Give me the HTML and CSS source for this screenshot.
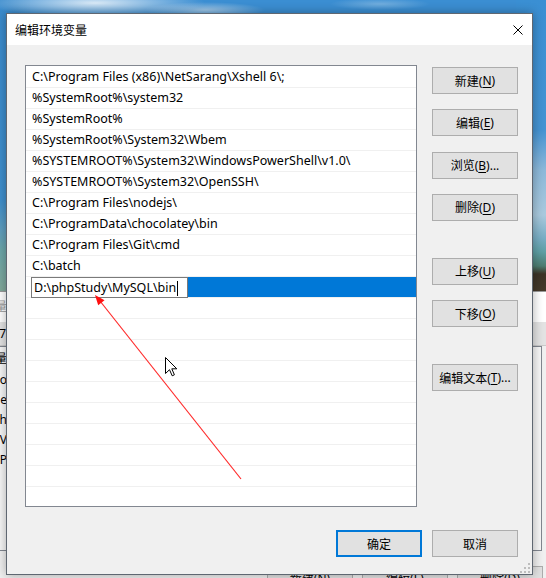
FILE: index.html
```html
<!DOCTYPE html>
<html lang="zh-CN">
<head>
<meta charset="utf-8">
<title>编辑环境变量</title>
<link rel="stylesheet" href="styles.css">
</head>
<body>
<div class="bgwin">
  <div class="bg-title">环境变量</div>
  <div class="bg-band"><span class="bg-cell">7</span></div>
  <div class="bg-list">
    <div class="bg-row bg-head"><span class="bg-cell">量</span></div>
    <div class="bg-row"><span class="bg-cell">o</span></div>
    <div class="bg-row"><span class="bg-cell">e</span></div>
    <div class="bg-row"><span class="bg-cell">th</span></div>
    <div class="bg-row"><span class="bg-cell">V</span></div>
    <div class="bg-row"><span class="bg-cell">IP</span></div>
  </div>
  <div class="bg-buttons">
    <span class="bg-btn">新建(N)</span>
    <span class="bg-btn">编辑(E)</span>
    <span class="bg-btn">删除(D)</span>
  </div>
</div>

<section class="dialog">
  <header class="titlebar">
    <span class="title">编辑环境变量</span>
    <svg class="close" width="10" height="10" viewBox="0 0 10 10"><path d="M0.5 0.5 L9.5 9.5 M9.5 0.5 L0.5 9.5" stroke="#000" stroke-width="1" fill="none"/></svg>
  </header>
  <div class="content">
    <div class="main">
      <div class="list">
        <div class="row">C:\Program Files (x86)\NetSarang\Xshell 6\;</div>
        <div class="row">%SystemRoot%\system32</div>
        <div class="row">%SystemRoot%</div>
        <div class="row">%SystemRoot%\System32\Wbem</div>
        <div class="row">%SYSTEMROOT%\System32\WindowsPowerShell\v1.0\</div>
        <div class="row">%SYSTEMROOT%\System32\OpenSSH\</div>
        <div class="row">C:\Program Files\nodejs\</div>
        <div class="row">C:\ProgramData\chocolatey\bin</div>
        <div class="row">C:\Program Files\Git\cmd</div>
        <div class="row">C:\batch</div>
        <div class="row sel"><span class="edit">D:\phpStudy\MySQL\bin<span class="caret"></span></span></div>
        <div class="row"></div>
        <div class="row"></div>
        <div class="row"></div>
        <div class="row"></div>
        <div class="row"></div>
        <div class="row"></div>
        <div class="row"></div>
        <div class="row"></div>
        <div class="row"></div>
        <div class="row"></div>
      </div>
      <div class="side">
        <button class="btn">新建(<u>N</u>)</button>
        <button class="btn">编辑(<u>E</u>)</button>
        <button class="btn">浏览(<u>B</u>)...</button>
        <button class="btn">删除(<u>D</u>)</button>
        <button class="btn group">上移(<u>U</u>)</button>
        <button class="btn">下移(<u>O</u>)</button>
        <button class="btn group">编辑文本(<u>T</u>)...</button>
      </div>
    </div>
    <div class="footer">
      <button class="btn default">确定</button>
      <button class="btn">取消</button>
    </div>
  </div>
  <svg class="grip" width="10" height="10" viewBox="0 0 10 10">
    <rect x="8" y="0" width="2" height="2"/><rect x="4" y="4" width="2" height="2"/><rect x="8" y="4" width="2" height="2"/>
    <rect x="0" y="8" width="2" height="2"/><rect x="4" y="8" width="2" height="2"/><rect x="8" y="8" width="2" height="2"/>
  </svg>
</section>

<svg class="annot" width="546" height="578" viewBox="0 0 546 578">
  <line x1="241" y1="479" x2="100" y2="301" stroke="#ff2a2a" stroke-width="1.2"/>
  <polygon points="95,295 104.5,300.2 98.2,305.2" fill="#ff1010"/>
</svg>

<svg class="cursor" width="13" height="20" viewBox="0 0 13 20">
  <path d="M0.5 0.5 L0.5 16.5 L4.5 12.7 L7.2 18.8 L9.4 17.8 L6.8 11.8 L11.8 11.8 Z" fill="#fff" stroke="#000" stroke-width="1" stroke-linejoin="miter"/>
</svg>
</body>
</html>
```

FILE: styles.css
```css
* { box-sizing: border-box; }

html, body { margin: 0; padding: 0; }

body {
  width: 546px;
  height: 578px;
  overflow: hidden;
  position: relative;
  font-family: "Noto Sans", "Noto Sans CJK SC", sans-serif;
  font-size: 12px;
  color: #000;
  background:
    radial-gradient(ellipse 110px 14px at 95px 3px, rgba(226,238,248,0.95), rgba(226,238,248,0)),
    radial-gradient(ellipse 60px 8px at 205px 10px, rgba(200,222,240,0.7), rgba(200,222,240,0)),
    radial-gradient(ellipse 50px 6px at 380px 4px, rgba(150,195,230,0.6), rgba(150,195,230,0)),
    linear-gradient(180deg, #3a8bcd 0, #3f8fcd 200px, #5f9ebf 230px, #6ca7aa 250px, #82a99b 290px) left top / 30px 100% no-repeat,
    linear-gradient(180deg, #3a8fd3 0, #4593d2 130px, #8cb8d9 170px, #a9c9dd 215px, #78adc4 238px, #5e9fa4 252px, #4d7c70 266px, #3c3326 274px, #45392a 291px) right top / 30px 100% no-repeat,
    #3b8ed2;
}

/* background window (partly hidden behind the dialog) */
.bgwin {
  position: absolute;
  left: -52px;
  top: 291px;
  width: 600px;
  height: 300px;
  background: #f0f0f0;
  border: 1px solid #9a9a9a;
}
.bg-title {
  height: 30px;
  background: #fff;
  color: #9a9a9a;
  padding-left: 10px;
  line-height: 30px;
}
.bg-band {
  height: 24px;
  background: #e3e3e3;
  border-bottom: 1px solid #cacaca;
  line-height: 23px;
  display: flex;
}
.bg-cell {
  display: block;
  width: 57px;
  text-align: right;
  white-space: nowrap;
}
.bg-list {
  margin-left: 1px;
  width: 592px;
  height: 205px;
  border: 1px solid #828790;
  background: #f7f7f7;
}
.bg-row {
  height: 20px;
  line-height: 20px;
  display: flex;
}
.bg-row .bg-cell { width: 56px; }
.bg-head { height: 23px; line-height: 23px; }
.bg-buttons {
  margin-top: 15px;
  padding-left: 318px;
  display: flex;
  gap: 9px;
}
.bg-btn {
  width: 86px;
  height: 23px;
  border: 1px solid #adadad;
  background: #e1e1e1;
  display: flex;
  align-items: center;
  justify-content: center;
}

/* dialog */
.dialog {
  position: absolute;
  left: 6px;
  top: 13px;
  width: 527px;
  height: 562px;
  border: 1px solid #5f6771;
  background: #f0f0f0;
  display: flex;
  flex-direction: column;
  box-shadow: 0 0 10px rgba(0, 0, 0, 0.32);
}
.titlebar {
  flex: none;
  height: 31px;
  background: #fff;
  display: flex;
  align-items: center;
  justify-content: space-between;
  padding: 0 9px 0 8px;
}
.title { font-size: 12px; }
.close { display: block; }

.content {
  flex: 1;
  padding: 20px 14px 17px 18px;
  display: flex;
  flex-direction: column;
}
.main {
  display: flex;
  gap: 15px;
}
.list {
  width: 392px;
  height: 442px;
  border: 1px solid #828790;
  background: #fff;
  padding-top: 1px;
  overflow: hidden;
  font-size: 12.5px;
}
.row {
  height: 21px;
  border-bottom: 1px solid #f0f0f0;
  padding-left: 6px;
  line-height: 20px;
  white-space: nowrap;
}
.row.sel {
  padding-left: 5px;
  background: linear-gradient(90deg, #fff 5px, #0078d7 5px);
}
.edit {
  display: block;
  width: 157px;
  height: 21px;
  border: 1px solid #7a7a7a;
  background: #fff;
  padding-left: 2px;
  line-height: 19px;
}
.caret {
  display: inline-block;
  width: 1px;
  height: 15px;
  background: #000;
  vertical-align: middle;
  margin-left: 1px;
}

.side {
  width: 86px;
  padding-top: 2px;
  display: flex;
  flex-direction: column;
  gap: 15.33px;
}
.btn {
  appearance: none;
  -webkit-appearance: none;
  margin: 0;
  width: 86px;
  height: 27px;
  padding: 0;
  background: #e1e1e1;
  border: 1px solid #adadad;
  border-radius: 0;
  font-family: inherit;
  font-size: 12px;
  color: #000;
  display: flex;
  align-items: center;
  justify-content: center;
  white-space: nowrap;
}
.btn u { text-underline-offset: 2px; }
.side .group { margin-top: 21.67px; }

.footer {
  margin-top: 23px;
  display: flex;
  justify-content: flex-end;
  gap: 10px;
}
.btn.default { border: 2px solid #0078d7; }

.grip {
  position: absolute;
  right: 2px;
  bottom: 1px;
  fill: #bdbdbd;
}

/* annotation overlay */
.annot {
  position: absolute;
  left: 0;
  top: 0;
  pointer-events: none;
}
.cursor {
  position: absolute;
  left: 165px;
  top: 357px;
  pointer-events: none;
}
```
